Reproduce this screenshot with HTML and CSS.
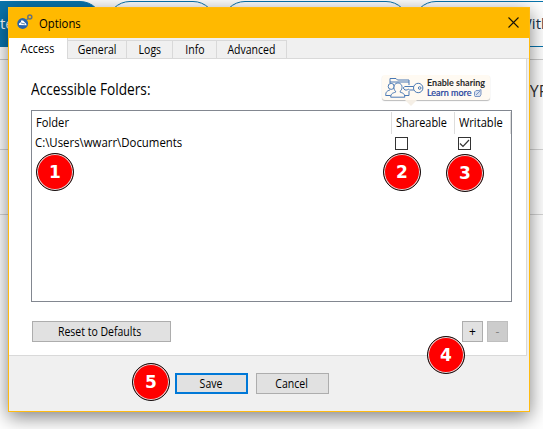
FILE: index.html
```
<!DOCTYPE html>
<html lang="en">
<head>
<meta charset="utf-8">
<title>Options</title>
<link rel="stylesheet" href="styles.css">
</head>
<body>
<div class="page">
  <div class="pills">
    <span class="pill filled">te</span>
    <span class="pill second"></span>
    <span class="pill wide"></span>
    <span class="pill last">With</span>
  </div>
  <div class="band first"><span>TYP</span></div>
  <div class="band second-band"></div>
</div>
<main class="window">
  <header class="titlebar">
    <svg class="app-icon" width="17" height="16" viewBox="0 0 17 16"><circle cx="5.7" cy="9.5" r="5.4" fill="#2864ad"/><path d="M2 11V9.500L4 8V6.500h2l3 3 .7 1.800z" fill="#fff"/><path d="M4 9l4 1" stroke="#6387ad"/><circle cx="12.800" cy="2.900" r="2" fill="none" stroke="#67727b" stroke-width="1.500"/><path d="M9.400 6.200l1.700-1.700" stroke="#67727b" stroke-width="1.200"/></svg>
    <h1>Options</h1>
    <svg class="close" width="11" height="11" viewBox="0 0 11 11"><path d="M.5.5l10 10M10.500.5l-10 10" stroke="#18130a" stroke-width="1.100"/></svg>
  </header>
  <nav class="tabs">
    <span class="tab active w-access"><b>Access</b></span>
    <span class="tab w-general"><b>General</b></span>
    <span class="tab w-logs"><b>Logs</b></span>
    <span class="tab w-info"><b>Info</b></span>
    <span class="tab w-advanced"><b>Advanced</b></span>
  </nav>
  <section class="panel">
    <div class="heading">
      <h2>Accessible Folders:</h2>
      <div class="share">
        <svg width="39" height="21" viewBox="0 0 39 21" fill="none" stroke="#4a79b5" stroke-width="1"><path d="M5 6V1.500h6L12.500 3H24v5M5 5h19M17 18.500h7V14"/><circle cx="6.200" cy="9.400" r="3"/><path d="M.7 18.500c0-4 1.500-4.500 4.200-5.500M.7 18.500h5"/><path d="M9 10.500c-.3-6 8.200-6 8 0-.1 2-1 3-1.800 3.700v1c2.800 1 4.300 1 4.600 5H5.700c.2-4 2-4 4.800-5v-1C9.500 13.500 9 12 9 10.500z" fill="#fffaf2"/><circle cx="33.200" cy="11" r="4.700"/><circle cx="34.700" cy="11" r="1.300"/><path d="M28.700 9.500h-9l-1.500 1.500 1.700 2h2.500l1-1 1.200 1h4.200"/></svg>
        <div class="share-text"><strong>Enable sharing</strong><span>Learn more <svg width="8" height="8" viewBox="0 0 8 8" fill="#d7e0ef" stroke="#6f8dbe" stroke-width=".9"><path d="M2 1.500h3l2-1v5l-1 2H1l-.5-1V3zM2 6l4-4"/></svg></span></div>
      </div>
    </div>
    <div class="list">
      <div class="row head"><span class="folder"><b>Folder</b></span><span class="shareable"><b>Shareable</b></span><span class="writable"><b>Writable</b></span></div>
      <div class="row data"><span class="folder"><b>C:\Users\wwarr\Documents</b></span><span class="shareable"><i class="check"></i></span><span class="writable"><i class="check"><svg width="11" height="11" viewBox="0 0 11 11"><path d="M1 5.500l3 3 6-6.500" fill="none" stroke="#333" stroke-width="1.200"/></svg></i></span></div>
    </div>
    <div class="actions">
      <button class="reset"><b>Reset to Defaults</b></button>
      <button class="small">+</button>
      <button class="small off">-</button>
    </div>
  </section>
  <footer>
    <button class="save"><b>Save</b></button>
    <button class="cancel"><b>Cancel</b></button>
  </footer>
</main>
<span class="marker m1">1</span>
<span class="marker m2">2</span>
<span class="marker m3">3</span>
<span class="marker m4">4</span>
<span class="marker m5">5</span>
</body>
</html>
```
FILE: styles.css
```
* { box-sizing: border-box; }
body { margin: 0; width: 543px; height: 429px; position: relative; overflow: hidden; background: #fff; font: 12px "Open Sans", "Noto Sans", sans-serif; color: #000; }
h1, h2 { margin: 0; font-weight: 400; }
b { font-weight: 400; display: inline-block; white-space: nowrap; transform: scaleX(.875); }
.page { width: 543px; height: 429px; overflow: hidden; }
.pills { height: 60px; padding-top: 1px; display: flex; border-bottom: 1px solid #ccc; }
.pill { flex: none; height: 46px; border: 1px solid #0874ad; border-radius: 23px; font-size: 16px; line-height: 43px; color: #17344a; }
.pill.filled { width: 128px; margin-left: -25px; padding-left: 24px; background: #0874ad; color: #fff; font-size: 15px; }
.pill.second { width: 109px; margin-left: 4px; }
.pill.wide { width: 187px; margin-left: 6px; }
.pill.last { width: 200px; margin-left: 4px; padding-left: 104px; font-size: 15px; }
.band { height: 90px; border-bottom: 1px solid #d5d5d5; }
.band.first { padding-left: 521px; }
.band.second-band { height: 65px; }
.band span { font-size: 16px; line-height: 62px; color: #333; }
.window { position: absolute; left: 8px; top: 7px; width: 522px; height: 405px; border: 1px solid #fb1; background: #f0f0f0; box-shadow: 0 5px 18px rgba(0,0,0,.5); }
.titlebar { height: 30px; background: #ffb900; display: flex; align-items: center; padding: 0 10px 0 8px; }
.app-icon { margin-top: -3px; }
h1 { font-size: 13px; line-height: 16px; margin-left: 5px; flex: 1; transform: scaleX(.87); transform-origin: left; }
.close { margin-top: -1px; }
.tabs { height: 21px; display: flex; align-items: flex-end; border-bottom: 1px solid #d9d9d9; }
.tab { height: 18px; border: 1px solid #d9d9d9; border-left: 0; border-bottom: 0; text-align: center; line-height: 18px; }
.tab.active { height: 21px; margin-bottom: -1px; background: #fff; line-height: 22px; border-top: 0; }
.w-access { width: 59px; }
.w-access b { transform: scaleX(.9); }
.w-general { width: 59px; }
.w-logs { width: 46px; }
.w-info { width: 44px; }
.w-advanced { width: 70px; }
.panel { width: 518px; height: 297px; background: #fff; border: solid #d9d9d9; border-width: 0 1px 1px 0; padding: 16px 14px 0 22px; }
.heading { display: flex; justify-content: space-between; height: 35px; padding-right: 22px; }
h2 { width: 140px; font-size: 16px; line-height: 28px; white-space: nowrap; transform: scaleX(.855); transform-origin: left; }
.share { position: relative; width: 108px; height: 25px; background: #fffaf2; border-radius: 3px; box-shadow: 0 1px 1px #bbb; display: flex; align-items: center; padding-left: 3px; }
.share::after { content: ""; position: absolute; left: 23px; top: 25px; border: 6px solid transparent; border-top-color: #f5efe6; border-bottom: 0; }
.share-text { margin-left: 3px; font: 9px/10px Lato, sans-serif; white-space: nowrap; display: grid; }
.share-text strong { color: #2a2a2a; }
.share-text span { color: #1d419c; -webkit-text-stroke: .2px; }
.share-text svg { vertical-align: -1px; }
.list { width: 481px; height: 192px; border: 1px solid #828790; padding: 1px 0 0 1px; }
.row { display: flex; height: 22px; line-height: 22px; }
.row.data { height: 20px; line-height: 18px; }
.row b { transform: scaleX(.93); transform-origin: left; }
.row.data b { transform: scaleX(.95); }
.row .folder { width: 359px; padding-left: 3px; }
.row.data .folder { padding-left: 2px; }
.row .shareable { width: 63px; padding-left: 4px; }
.row .shareable b { transform: scaleX(.91); }
.row .writable { width: 56px; padding-left: 4px; }
.head span { border-right: 1px solid #ddd; }
.data .shareable, .data .writable { padding-left: 3px; }
.check { display: block; width: 13px; height: 13px; border: 1px solid #333; margin-top: 3px; }
.check svg { display: block; }
.actions { display: flex; margin: 19px 4px 0 1px; }
button { font: 12px "Open Sans", "Noto Sans", sans-serif; padding: 0; border: 1px solid #adadad; background: #e1e1e1; color: #000; height: 21px; line-height: 19px; }
.reset { width: 139px; margin-right: auto; padding-right: 3px; }
.small { width: 21px; margin-left: 4px; }
.off { background: #ccc; border-color: #bfbfbf; color: #838383; }
footer { display: flex; gap: 8px; padding: 17px 0 0 166px; }
.save, .cancel { width: 73px; padding-right: 2px; }
.save { border: 2px solid #0078d7; line-height: 17px; }
.marker { position: absolute; width: 38px; height: 38px; border-radius: 50%; background: #f00; border: 1px solid #111; box-shadow: inset 0 0 0 1px #ddd; color: #fff; font: bold 17px/36px "DejaVu Sans", sans-serif; text-align: center; }
.m1 { left: 36px; top: 153px; }
.m2 { left: 383px; top: 153px; }
.m3 { left: 446px; top: 154px; }
.m4 { left: 427px; top: 336px; }
.m5 { left: 132px; top: 363px; }
```
